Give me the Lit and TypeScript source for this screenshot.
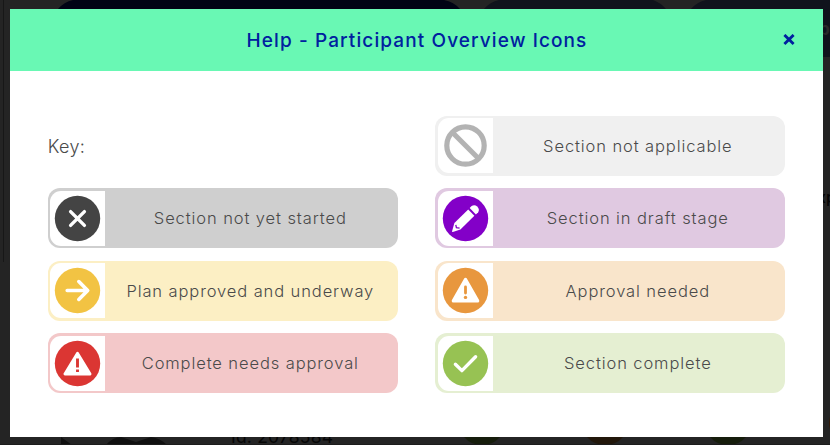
import { LitElement, html, svg, css, SVGTemplateResult } from "lit";
import { customElement, property } from "lit/decorators.js";

type IconName = "none" | "cross" | "pencil" | "arrow" | "warning" | "alert" | "tick";

const ICONS: Record<IconName, SVGTemplateResult> = {
  none: svg`
    <g fill="none" stroke="#b3b3b3" stroke-width="5.2">
      <circle cx="27.5" cy="27.5" r="18.7" />
      <path d="M14.5 14.5 L40.5 40.5" />
    </g>`,
  cross: svg`
    <circle cx="27.5" cy="27.5" r="22.7" fill="#444" />
    <path d="M20.6 20.6 L34.4 34.4 M34.4 20.6 L20.6 34.4" stroke="#fff" stroke-width="3.4" stroke-linecap="round" />`,
  pencil: svg`
    <circle cx="27.5" cy="27.5" r="22.7" fill="#8300c8" />
    <path d="M30.2 18.4 L36.4 24.8 L22.4 38.6 L14.8 41 Q13.9 41.2 14.1 40.3 L16.4 32 Z" fill="#fff" />
    <path d="M31.7 17 L33.6 15.1 Q36.4 13 39.2 15.5 Q42 18.5 40.2 21.2 L37.9 23.4 Z" fill="#fff" />
    <path d="M17.8 33.8 L18.4 36.6 L21.6 37.2" fill="none" stroke="#8300c8" stroke-width="1.3" />`,
  arrow: svg`
    <circle cx="27.5" cy="27.5" r="22.7" fill="#f2c343" />
    <path d="M17.2 27.5 H37 M28.8 18.6 L37.7 27.5 L28.8 36.4" fill="none" stroke="#fff" stroke-width="3.6" stroke-linecap="round" stroke-linejoin="round" />`,
  warning: svg`
    <circle cx="27.5" cy="27.5" r="22.7" fill="#e8973e" />
    <path d="M27.5 16.6 L39.6 37.9 H15.4 Z" fill="#fff" stroke="#fff" stroke-width="3.4" stroke-linejoin="round" />
    <path d="M27.5 23.9 V30" stroke="#e8973e" stroke-width="2.8" stroke-linecap="round" />
    <circle cx="27.5" cy="34.4" r="1.7" fill="#e8973e" />`,
  alert: svg`
    <circle cx="27.5" cy="27.5" r="22.7" fill="#db3633" />
    <path d="M27.5 17.2 L40.1 38 H14.9 Z" fill="#fff" stroke="#fff" stroke-width="2.8" stroke-linejoin="round" />
    <path d="M27.5 22.6 V31.6 M27.5 33.5 V36" stroke="#db3633" stroke-width="2.9" />`,
  tick: svg`
    <circle cx="27.5" cy="27.5" r="22.7" fill="#97c253" />
    <path d="M17.4 28.2 L23.9 34.6 L37.6 20.8" fill="none" stroke="#fff" stroke-width="3.4" stroke-linecap="round" stroke-linejoin="round" />`,
};

@customElement("key-item")
export class KeyItem extends LitElement {
  @property() icon: IconName = "none";
  @property() label = "";

  static styles = css`
    :host {
      display: flex;
      box-sizing: border-box;
      height: 60px;
      padding: 2.5px;
      border-radius: 12px;
    }
    .icon {
      flex: none;
      width: 55px;
      height: 55px;
      background: #fff;
      border-radius: 11px 0 0 11px;
    }
    .icon svg {
      display: block;
    }
    .label {
      flex: 1;
      margin-top: 0.4px;
      text-align: center;
      line-height: 55px;
      white-space: nowrap;
    }
  `;

  render() {
    return html`
      <div class="icon">
        <svg width="55" height="55" viewBox="0 0 55 55">${ICONS[this.icon]}</svg>
      </div>
      <div class="label">${this.label}</div>
    `;
  }
}

@customElement("app-root")
export class AppRoot extends LitElement {
  static styles = css`
    :host {
      display: block;
      position: relative;
      box-sizing: border-box;
      width: 830px;
      height: 445px;
      padding: 9px 7px 8px 10px;
      overflow: hidden;
      background: #242424;
      font-family: Inter, "Open Sans", sans-serif;
      color: #4a4a4a;
    }
    .backdrop {
      position: absolute;
      inset: 0;
    }
    .dialog {
      position: relative;
      height: 428px;
      background: #fff;
    }
    .header {
      display: flex;
      align-items: center;
      box-sizing: border-box;
      height: 62px;
      padding: 0 28px 0 40px;
      background: #69f8b4;
      color: #00209f;
    }
    .title {
      flex: 1;
      margin: 0;
      padding-left: 1px;
      padding-top: 1px;
      text-align: center;
      font-size: 19px;
      font-weight: 550;
      letter-spacing: 1.1px;
    }
    .close {
      display: block;
      width: 12px;
      height: 12px;
      padding: 0;
      border: 0;
      background: none;
    }
    .close svg {
      display: block;
    }
    .keys {
      display: grid;
      grid-template-columns: 350px 350px;
      grid-auto-rows: 60px;
      gap: 12.4px 37.5px;
      padding: 44.9px 0 0 37.8px;
      font-size: 16.5px;
      font-weight: 300;
      letter-spacing: 0.9px;
    }
    .heading {
      line-height: 61px;
      font-size: 18px;
      letter-spacing: 0.3px;
    }
    .na { background: #f0f0f0; }
    .idle { background: #cfcfcf; }
    .draft { background: #e0c9e1; }
    .underway { background: #fcefc4; }
    .approval { background: #f9e5cb; }
    .urgent { background: #f3c8c9; }
    .complete { background: #e5efd2; }
  `;

  render() {
    return html`
      <svg class="backdrop" width="830" height="445" viewBox="0 0 830 445">
        <path d="M3.5 0 V262" stroke="#171717" />
        <path d="M58 9 Q64 2 73 0 H444 Q454 2 460 9 Z" fill="#000314" />
        <path d="M484 9 Q490 2 499 0 H653 Q661 3 666 9 Z" fill="#10131c" />
        <path d="M691 9 Q697 2 706 0 H830 V57 H823 V9 Z" fill="#10131c" />
        <text x="819" y="35" font-size="17" font-weight="700" fill="#292929">p</text>
        <text x="817" y="203" font-size="16" font-weight="500" fill="#050505">xp</text>
        <path d="M61 437 L72 445 H61 Z M106 445 Q113 437 121 437 L136 442 L151 437 Q160 438 167 445 Z" fill="#101010" />
        <text x="231" y="443" font-size="17.5" letter-spacing="0.2" fill="#060606">Id: 2078584</text>
        <path d="M464 437 H500 Q493 445 482 445 Q471 445 464 437 Z" fill="#161d0c" />
        <path d="M587 437 H623 Q616 445 605 445 Q594 445 587 437 Z" fill="#22170b" />
        <path d="M710 437 H746 Q739 445 728 445 Q717 445 710 437 Z" fill="#161d0c" />
        <path d="M830 417 Q828 423 830 429 Z" fill="#331a07" />
        <path d="M0 444.5 H830" stroke="#1c1c1c" />
      </svg>
      <section class="dialog" role="dialog">
        <header class="header">
          <h1 class="title">Help - Participant Overview Icons</h1>
          <button class="close" aria-label="Close">
            <svg width="12" height="12" viewBox="0 0 12 12">
              <path d="M1.4 0.9 L10.6 10.1 M10.6 0.9 L1.4 10.1" stroke="#00209f" stroke-width="2.8" />
            </svg>
          </button>
        </header>
        <div class="keys">
          <div class="heading">Key:</div>
          <key-item class="na" icon="none" label="Section not applicable"></key-item>
          <key-item class="idle" icon="cross" label="Section not yet started"></key-item>
          <key-item class="draft" icon="pencil" label="Section in draft stage"></key-item>
          <key-item class="underway" icon="arrow" label="Plan approved and underway"></key-item>
          <key-item class="approval" icon="warning" label="Approval needed"></key-item>
          <key-item class="urgent" icon="alert" label="Complete needs approval"></key-item>
          <key-item class="complete" icon="tick" label="Section complete"></key-item>
        </div>
      </section>
    `;
  }
}
